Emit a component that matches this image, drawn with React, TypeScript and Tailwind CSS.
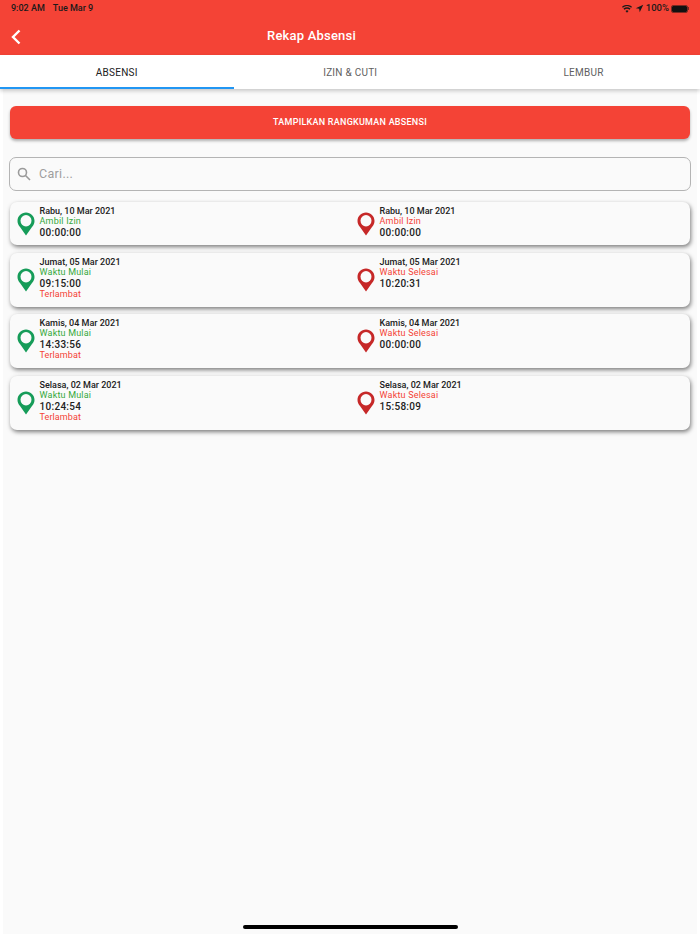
function Pin({ color }: { color: string }) {
	return (
		<svg width="18" height="24" viewBox="0 0 18 24" className="shrink-0">
			<path
				d="M9 0.500C4.300 0.500 0.500 4.200 0.500 8.900c0 2.400 1 4.400 2.500 6.100L9 23.500l6-8.500c1.500-1.700 2.500-3.700 2.500-6.100C17.500 4.200 13.700 0.500 9 0.500z"
				fill={color}
			/>
			<ellipse cx="9" cy="8.800" rx="5.500" ry="5.700" fill="#fafafa" />
		</svg>
	);
}

type Side = { date: string; label: string; time: string; late?: boolean };

function Entry({ side, pin, labelClass }: { side: Side; pin: string; labelClass: string }) {
	return (
		<div className="flex-1 flex items-center pl-[6.500px]">
			<Pin color={pin} />
			<div className="ml-[5px] self-start pt-[4px] text-[9px]">
				<div className="font-medium leading-[10px] text-[#212121]">{side.date}</div>
				<div className={labelClass + " leading-[11px] tracking-[0.2px]"}>{side.label}</div>
				<div className="font-medium text-[10px] leading-[11px] text-[#212121] tracking-[0.3px]">{side.time}</div>
				{side.late && <div className="leading-[10.500px] text-[#f44336] tracking-[0.1px]">Terlambat</div>}
			</div>
		</div>
	);
}

const rows: { h: string; left: Side; right: Side }[] = [
	{
		h: "h-[43px]",
		left: { date: "Rabu, 10 Mar 2021", label: "Ambil Izin", time: "00:00:00" },
		right: { date: "Rabu, 10 Mar 2021", label: "Ambil Izin", time: "00:00:00" },
	},
	{
		h: "h-[54px]",
		left: { date: "Jumat, 05 Mar 2021", label: "Waktu Mulai", time: "09:15:00", late: true },
		right: { date: "Jumat, 05 Mar 2021", label: "Waktu Selesai", time: "10:20:31" },
	},
	{
		h: "h-[54px]",
		left: { date: "Kamis, 04 Mar 2021", label: "Waktu Mulai", time: "14:33:56", late: true },
		right: { date: "Kamis, 04 Mar 2021", label: "Waktu Selesai", time: "00:00:00" },
	},
	{
		h: "h-[54px]",
		left: { date: "Selasa, 02 Mar 2021", label: "Waktu Mulai", time: "10:24:54", late: true },
		right: { date: "Selasa, 02 Mar 2021", label: "Waktu Selesai", time: "15:58:09" },
	},
];

export default function App() {
	return (
		<div className="w-[700px] h-[934px] relative overflow-hidden flex flex-col bg-white font-['Roboto',sans-serif]">
			{/* header */}
			<div className="h-[55px] bg-[#f44336] shrink-0">
				<div className="flex items-center justify-between h-[17px] px-[11px] text-[9px] text-[#1a1a1a] font-medium">
					<div className="flex gap-[8px]">
						<span>9:02 AM</span>
						<span>Tue Mar 9</span>
					</div>
					<div className="flex items-center gap-[2px]">
						<svg width="10" height="8" viewBox="0 0 24 18" fill="#1a1a1a">
							<path d="M12 18l-3.600-4.500a6 6 0 0 1 7.200 0zM5.800 10.800L3.500 8a13.500 13.500 0 0 1 17 0l-2.300 2.800a10 10 0 0 0-12.400 0zM1.800 5.800L0 3.500a19 19 0 0 1 24 0l-1.800 2.300a16 16 0 0 0-20.400 0z" />
						</svg>
						<svg width="9" height="9" viewBox="0 0 12 12" fill="#1a1a1a" className="ml-[1px]">
							<path d="M11 1L1 5.500l4.500.8.800 4.700z" />
						</svg>
						<span className="text-[9.500px]">100%</span>
						<div className="flex items-center ml-[1px]">
							<div className="w-[15px] h-[6px] bg-[#111] rounded-[1px] outline outline-1 outline-[#7a2a22]" />
							<div className="w-[1px] h-[3px] bg-[#7a2a22] ml-[1px]" />
						</div>
					</div>
				</div>
				<div className="flex items-center h-[38px] pl-[11px]">
					<svg width="10" height="16" viewBox="0 0 10 16" className="mt-[1px]">
						<path d="M8.500 1.500L2 8l6.500 6.500" fill="none" stroke="#fff" strokeWidth="2.400" />
					</svg>
					<div className="ml-[246px] text-white text-[13px] font-medium tracking-[0.2px]">Rekap Absensi</div>
				</div>
			</div>

			{/* tabs */}
			<div className="h-[34px] shrink-0 bg-white flex shadow-[0_2px_4px_rgba(0,0,0,0.2)] relative z-10 text-[10px] tracking-[0.25px]">
				<div className="w-[233.500px] flex items-center justify-center border-b-[2px] border-[#2196f3] text-[#212121] pt-[2px]">
					ABSENSI
				</div>
				<div className="w-[233.500px] flex items-center justify-center text-[#5f5f5f]">IZIN &amp; CUTI</div>
				<div className="w-[233px] flex items-center justify-center text-[#5f5f5f]">LEMBUR</div>
			</div>

			{/* body */}
			<div className="flex-1 mx-[3px] bg-[#fafafa] px-[7px] pt-[17px]">
				<button className="w-full h-[33px] pt-[1px] rounded-[6px] bg-[#f44336] text-white text-[9px] tracking-[0.25px] font-medium shadow-[0_2px_3px_rgba(0,0,0,0.3)]">
					TAMPILKAN RANGKUMAN ABSENSI
				</button>

				<div className="mt-[18px] -mx-[1px] h-[34px] rounded-[7px] border border-[#b4b4b4] flex items-center pl-[8px] text-[#9e9e9e]">
					<svg width="14" height="14" viewBox="0 0 14 14" fill="none" stroke="#9a9a9a" strokeWidth="1.600" className="-ml-[1px]">
						<circle cx="5.500" cy="5.500" r="4" />
						<path d="M8.500 8.500L13 13" />
					</svg>
					<span className="ml-[8px] text-[12.500px] tracking-[0.3px]">Cari...</span>
				</div>

				<div className="mt-[11px] flex flex-col gap-[7.500px]">
					{rows.map((row) => (
						<div
							key={row.left.date}
							className={"flex rounded-[7px] bg-[#fafafa] shadow-[1px_2px_4px_rgba(0,0,0,0.5)] " + row.h}
						>
							<Entry side={row.left} pin="#169c59" labelClass="text-[#35a83b]" />
							<Entry side={row.right} pin="#c62828" labelClass="text-[#f44336]" />
						</div>
					))}
				</div>
			</div>

			<div className="absolute bottom-[5px] left-[243px] w-[215px] h-[4px] rounded-full bg-black" />
		</div>
	);
}
